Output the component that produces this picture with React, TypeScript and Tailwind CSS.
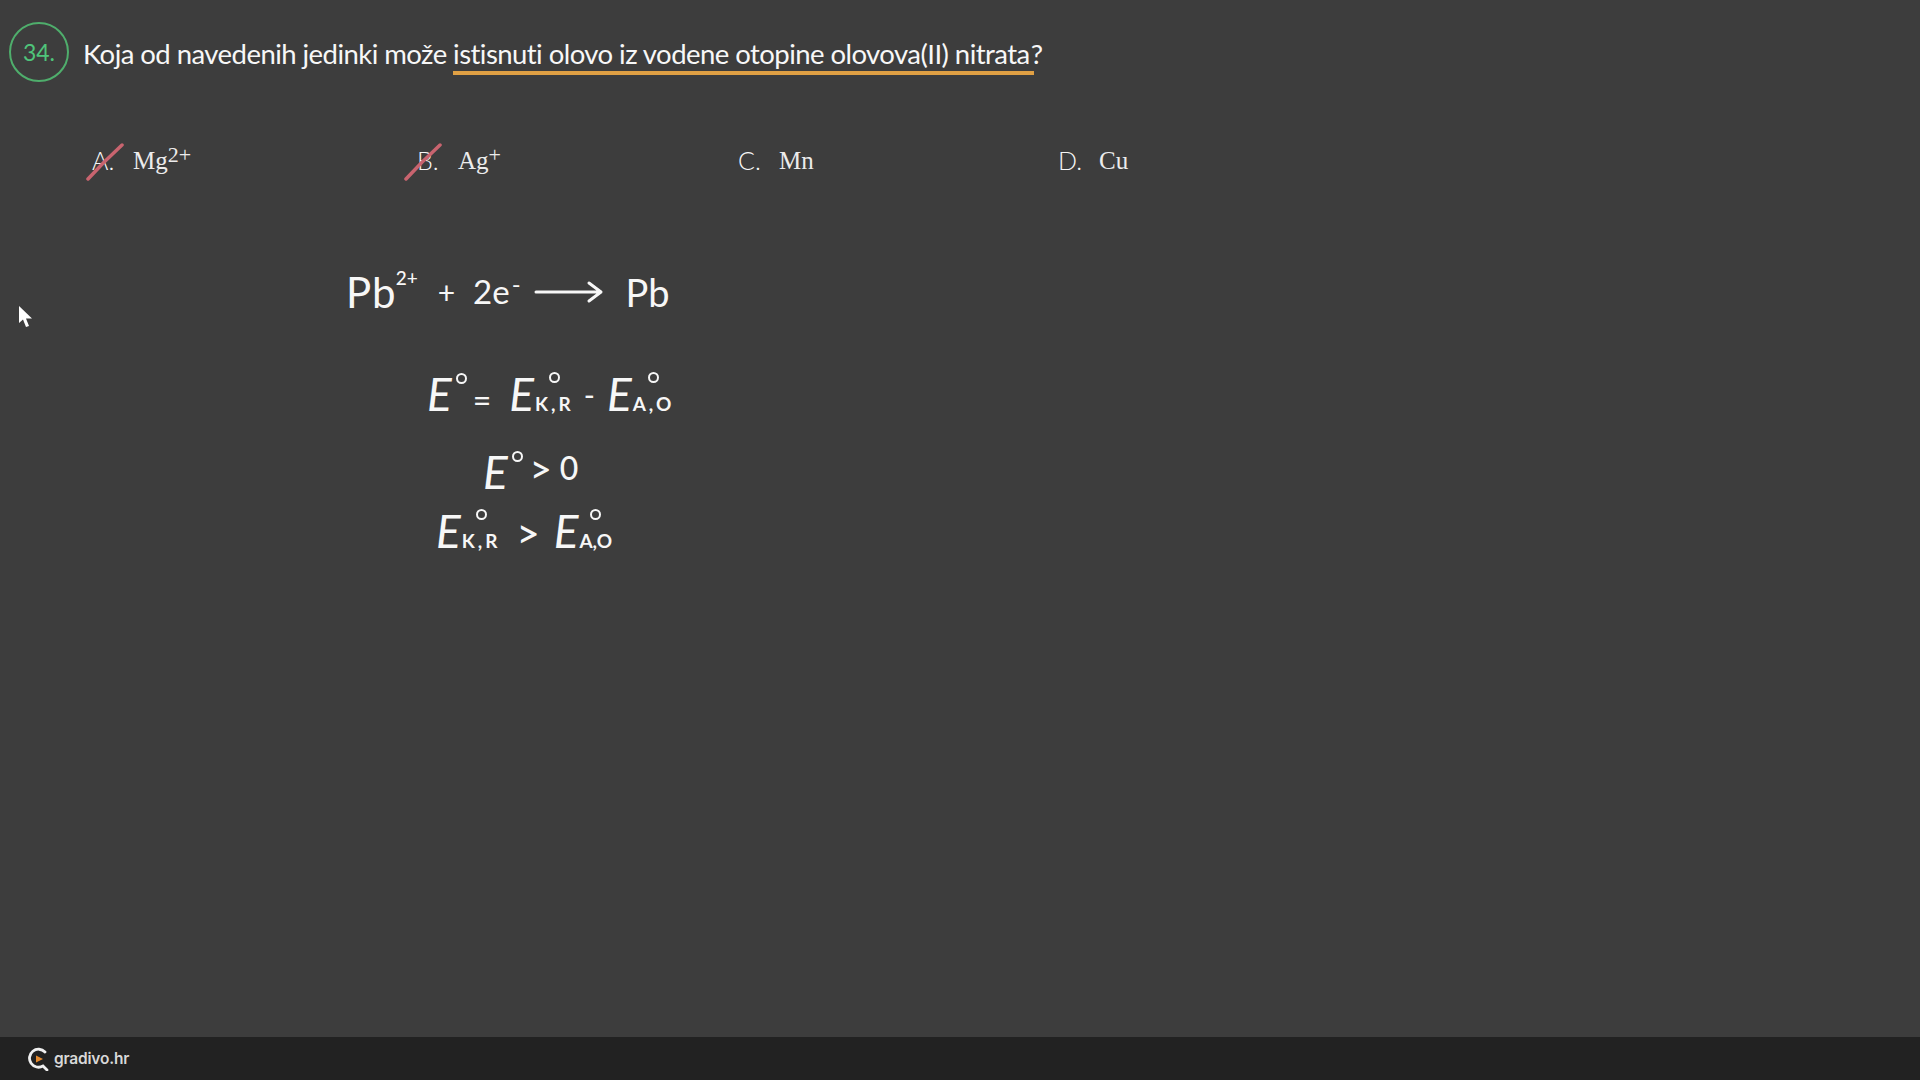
// Worked exam question slide
import React from "react";

const hand = "font-['Lato','Noto_Sans',sans-serif] text-[#f7f7f7]";
const serif = "font-['Liberation_Serif',serif] text-[#ececec]";

function Degree() {
  return <span className="inline-block w-[11px] h-[11px] rounded-full border-[2.5px] border-[#f7f7f7]" />;
}

// handwritten E with a degree mark above and optional subscript
function Potential({ sub, subClass = "tracking-[3px]", className = "" }: { sub?: string; subClass?: string; className?: string }) {
  return (
    <span className={`inline-flex items-start ${className}`}>
      <span className="text-[46px] leading-[44px] italic mt-[6px]">E</span>
      {sub ? (
        <span className="flex flex-col items-center ml-[1px] pt-[6px]">
          <Degree />
          <span className={`text-[19px] leading-[18px] font-bold mt-[12px] whitespace-nowrap ${subClass}`}>{sub}</span>
        </span>
      ) : (
        <span className="ml-[4px]"><Degree /></span>
      )}
    </span>
  );
}

function Option({ letter, value, sup, strike }: { letter: string; value: string; sup?: string; strike?: string }) {
  return (
    <div className="relative flex items-center">
      <span className={`${hand} text-[25px] w-[41px] font-light`}>{letter}.</span>
      <span className={`${serif} text-[25px] leading-[30px]`}>
        {value}
        {sup && <sup className="text-[22px] top-[-7px] leading-none">{sup}</sup>}
      </span>
      {strike && (
        <svg className={`absolute top-[0px] ${strike}`} width="40" height="40" viewBox="0 0 40 40" fill="none">
          <path d="M2 37 C12 26 24 14 36 3" stroke="#c9646f" strokeWidth="3.5" strokeLinecap="round" />
        </svg>
      )}
    </div>
  );
}

export default function App() {
  return (
    <div className="w-[1920px] h-[1080px] bg-[#3d3d3d] flex flex-col overflow-hidden relative">
      <main className="flex-1 flex flex-col">
        {/* question */}
        <div className="flex items-center pt-[22px] pl-[9px]">
          <div className="w-[60px] h-[60px] rounded-full border-2 border-[#4fae6c] flex items-center justify-center shrink-0">
            <span className="font-['Lato',sans-serif] text-[23px] text-[#4fc47a]">34.</span>
          </div>
          <p className={`${hand} text-[27.5px] leading-[40px] ml-[14px] tracking-[-0.55px] whitespace-nowrap mt-[4px]`}>
            Koja od navedenih jedinki može{" "}
            <span className="border-b-4 border-[#e0a044] pb-[1px] pr-[4px]">istisnuti olovo iz vodene otopine olovova(II) nitrata</span>
            <span className="-ml-[3px]">?</span>
          </p>
        </div>

        {/* answers */}
        <div className="flex mt-[60px] pl-[92px] h-[32px]">
          <div className="w-[325px]"><Option letter="A" value="Mg" sup="2+" strike="left-[-6px]" /></div>
          <div className="w-[321px]"><Option letter="B" value="Ag" sup="+" strike="left-[-13px]" /></div>
          <div className="w-[320px]"><Option letter="C" value="Mn" /></div>
          <div><Option letter="D" value="Cu" /></div>
        </div>

        {/* board notes */}
        <div className={`${hand} flex flex-col mt-[90px]`}>
          <div className="flex items-center ml-[346px] h-[56px]">
            <span className="text-[42px] tracking-[1px]">Pb</span>
            <span className="text-[19px] mb-[28px] font-medium -ml-[1px]">2+</span>
            <span className="text-[30px] ml-[20px]">+</span>
            <span className="text-[33px] ml-[18px]">2e</span>
            <span className="text-[24px] mb-[16px] ml-[2px]">-</span>
            <svg className="ml-[13px]" width="70" height="24" viewBox="0 0 70 24" fill="none">
              <path d="M2 12 H66 M55 3 L67 12 L55 21" stroke="#f7f7f7" strokeWidth="3" strokeLinecap="round" strokeLinejoin="round" />
            </svg>
            <span className="text-[38px] ml-[22px]">Pb</span>
          </div>

          <div className="flex items-start ml-[427px] mt-[46px] h-[60px]">
            <Potential />
            <span className="text-[32px] ml-[6px] mt-[10px]">=</span>
            <Potential sub="K,R" className="ml-[18px]" />
            <span className="text-[30px] ml-[10px] mt-[6px]">-</span>
            <Potential sub="A,O" className="ml-[12px]" />
          </div>

          <div className="flex items-start ml-[483px] mt-[18px] h-[54px]">
            <Potential />
            <span className="text-[38px] leading-[44px] ml-[7px] mt-[2px] font-medium">&gt;</span>
            <span className="text-[32px] leading-[44px] ml-[8px] mt-[2px] font-medium">0</span>
          </div>

          <div className="flex items-start ml-[436px] mt-[5px]">
            <Potential sub="K,R" />
            <span className="text-[40px] leading-[44px] ml-[16px] mt-[8px] font-medium">&gt;</span>
            <Potential sub="A,O" subClass="tracking-[0px]" className="ml-[14px]" />
          </div>
        </div>
      </main>

      {/* footer */}
      <footer className="h-[43px] bg-[#222222] flex items-center pl-[28px] shrink-0">
        <svg width="21" height="24" viewBox="0 0 21 24" fill="none">
          <path d="M17 5 A9 9 0 1 0 15 19 L19 23" stroke="#f0f0f0" strokeWidth="2.8" strokeLinecap="round" />
          <path d="M8 8.5 L15 12 L8 15.5 Z" fill="#e58a2e" />
        </svg>
        <span className="font-['Inter',sans-serif] font-semibold text-[15.5px] text-[#d8d8d8] ml-[5px] tracking-[-0.2px]">gradivo.hr</span>
      </footer>

      {/* mouse pointer */}
      <svg className="absolute left-[19px] top-[306px]" width="14" height="24" viewBox="0 0 14 24">
        <path d="M0 0 V17 L4 13.5 L7 21 L10 20 L7 12.5 H13 Z" fill="#ffffff" />
      </svg>
    </div>
  );
}
